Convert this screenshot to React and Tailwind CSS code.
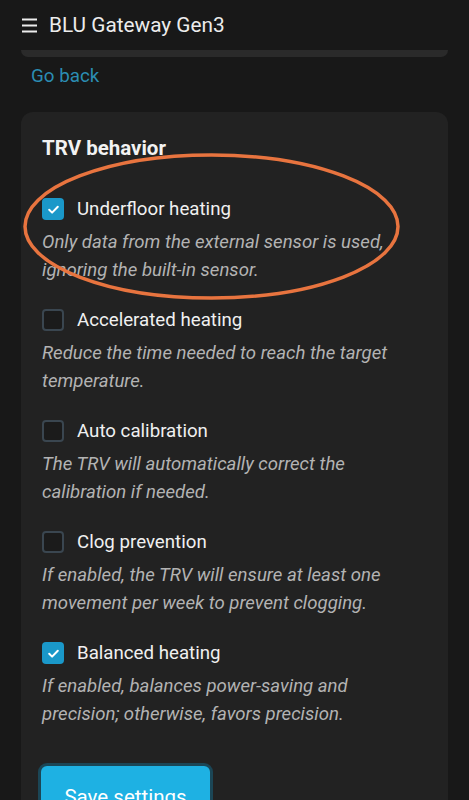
const options = [
  { label: "Underfloor heating", desc: "Only data from the external sensor is used, ignoring the built-in sensor.", checked: true },
  { label: "Accelerated heating", desc: "Reduce the time needed to reach the target temperature.", checked: false },
  { label: "Auto calibration", desc: "The TRV will automatically correct the calibration if needed.", checked: false },
  { label: "Clog prevention", desc: "If enabled, the TRV will ensure at least one movement per week to prevent clogging.", checked: false },
  { label: "Balanced heating", desc: "If enabled, balances power-saving and precision; otherwise, favors precision.", checked: true },
];

export default function App() {
  return (
    <div className="relative w-[469px] h-[800px] overflow-hidden bg-[#181818] font-['Roboto',sans-serif]">
      <div className="h-[50px] flex items-center pl-[22px] gap-[12px]">
        <svg width="15" height="15" viewBox="0 0 15 15" className="text-[#ececec]">
          <path d="M0 1.5h15M0 7.5h15M0 13.5h15" stroke="currentColor" strokeWidth="1.8" />
        </svg>
        <span className="text-[20.8px] leading-[24px] text-[#ececec]">BLU Gateway Gen3</span>
      </div>
      <div className="mx-[21px] h-[7px] bg-[#2a2a2a] rounded-b-[10px]" />

      <div className="pl-[31px] mt-[7px] text-[18.8px] leading-[24px] text-[#2b8db3]">Go back</div>

      <div className="mx-[21px] mt-[24px] bg-[#222222] rounded-[12px] px-[21px] pt-[24px] pb-[40px]">
        <h2 className="text-[20.5px] leading-[24px] font-bold text-[#f2f2f2]">TRV behavior</h2>

        <div className="mt-[37px] flex flex-col gap-[24px]">
          {options.map((o) => (
            <div key={o.label}>
              <div className="flex items-center gap-[13px] h-[24px]">
                {o.checked ? (
                  <span className="w-[22px] h-[22px] rounded-[4px] bg-[#1a98c9] flex items-center justify-center">
                    <svg width="13" height="13" viewBox="0 0 13 13">
                      <path d="M2.2 6.8l2.9 2.8 5.7-5.9" fill="none" stroke="#fff" strokeWidth="2" strokeLinecap="round" strokeLinejoin="round" />
                    </svg>
                  </span>
                ) : (
                  <span className="w-[22px] h-[22px] rounded-[4px] bg-[#1b1b1b] border-2 border-[#3a4650]" />
                )}
                <span className="text-[18.7px] leading-[24px] text-[#f0f0f0]">{o.label}</span>
              </div>
              <p className="mt-[7px] text-[18.6px] leading-[28px] italic text-[#b3b3b3]">{o.desc}</p>
            </div>
          ))}
        </div>

        <button className="mt-[38px] -ml-[1px] w-[169px] bg-[#1eb1e3] rounded-[6px] ring-[3px] ring-[#1b4656] pt-[19px] pb-[15px] text-[20.5px] leading-[24px] text-white">Save settings</button>
      </div>

      <svg className="absolute left-0 top-0 pointer-events-none" width="469" height="800">
        <ellipse cx="211.5" cy="226.5" rx="186.5" ry="71.5" fill="none" stroke="#e8743f" strokeWidth="3.5" />
      </svg>
    </div>
  );
}
